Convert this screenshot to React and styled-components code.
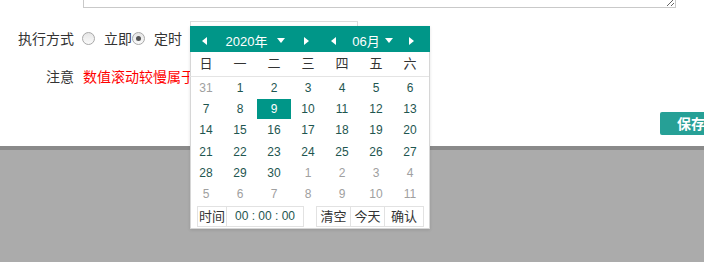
import React from 'react'
import styled, { createGlobalStyle } from 'styled-components';

const GlobalStyle = createGlobalStyle`
    body {
        margin: 0;
        overflow: hidden;
        font-family: "Liberation Sans", "Noto Sans CJK SC", sans-serif;
        color: #333;
    }
`

const weekDays = ['日', '一', '二', '三', '四', '五', '六'];

// 2020-06 grid, other-month days flagged
const buildDays = () => {
    const days = [{ n: 31, other: true }];
    for (let i = 1; i <= 30; i++) days.push({ n: i });
    for (let i = 1; i <= 11; i++) days.push({ n: i, other: true });
    return days;
}

function Calendar() {
    const days = buildDays();
    return (
        <CalBox>
            <CalHeader>
                <HeadHalf padLeft={12} padRight={12}>
                    <ArrowLeft />
                    <SelectText>2020年<Caret /></SelectText>
                    <ArrowRight />
                </HeadHalf>
                <HeadHalf padLeft={10} padRight={16}>
                    <ArrowLeft />
                    <SelectText gap={5}>06月<Caret /></SelectText>
                    <ArrowRight />
                </HeadHalf>
            </CalHeader>
            <WeekRow>
                {weekDays.map(d => <WeekCell key={d}>{d}</WeekCell>)}
            </WeekRow>
            <DayGrid>
                {days.map((d, i) => (
                    <DayCell key={i} other={d.other} active={!d.other && d.n === 9}>
                        {d.n}
                    </DayCell>
                ))}
            </DayGrid>
            <CalFooter>
                <TimeGroup>
                    <TimeLabel>时间</TimeLabel>
                    <TimeValue>00 : 00 : 00</TimeValue>
                </TimeGroup>
                <BtnGroup>
                    <CalBtn width={35}>清空</CalBtn>
                    <CalBtn width={35}>今天</CalBtn>
                    <CalBtn width={40}>确认</CalBtn>
                </BtnGroup>
            </CalFooter>
        </CalBox>
    )
}

function App() {
    return (
        <Page>
            <GlobalStyle />
            <Main>
                <FormRow>
                    <Label />
                    <TextArea />
                </FormRow>
                <FormRow top={13} height={34}>
                    <Label>执行方式</Label>
                    <RadioItem>
                        <Radio />
                        <span>立即</span>
                    </RadioItem>
                    <RadioItem>
                        <Radio checked />
                        <span>定时</span>
                    </RadioItem>
                    <DateField>
                        <Calendar />
                    </DateField>
                </FormRow>
                <FormRow top={11} height={20}>
                    <Label>注意</Label>
                    <Warning>数值滚动较慢属于正常现象，请耐心等待</Warning>
                </FormRow>
                <Actions>
                    <SaveButton>保存</SaveButton>
                </Actions>
            </Main>
            <Footer />
        </Page>
    )
}

export default App;

const Page = styled.div`
    width: 704px;
    height: 262px;
    overflow: hidden;
    display: flex;
    flex-direction: column;
`

const Main = styled.div`
    height: 146px;
    flex-shrink: 0;
    background: #fff;
    position: relative;
    z-index: 2;
`

const FormRow = styled.div`
    display: flex;
    align-items: center;
    margin-top: ${p => p.top || 0}px;
    height: ${p => p.height ? p.height + 'px' : 'auto'};
`

const Label = styled.div`
    width: 74px;
    margin-right: 9px;
    text-align: right;
    font-size: 14px;
    color: #333;
    flex-shrink: 0;
`

const TextArea = styled.textarea`
    width: 593px;
    height: 60px;
    margin: -52px 0 0;
    box-sizing: border-box;
    border: 1px solid #c9c9c9;
    display: block;
    font-family: inherit;
`

const RadioItem = styled.label`
    display: flex;
    align-items: center;
    font-size: 14px;
    color: #333;
    &:first-of-type {
        margin-left: -1px;
    }
`

const Radio = styled.span`
    width: 11px;
    height: 11px;
    border-radius: 50%;
    border: 1px solid #a8a8a8;
    background: linear-gradient(#e6e6e6, #fafafa);
    margin-right: 9px;
    position: relative;
    &::after {
        content: '';
        display: ${p => p.checked ? 'block' : 'none'};
        position: absolute;
        left: 3px;
        top: 3px;
        width: 5px;
        height: 5px;
        border-radius: 50%;
        background: #555;
    }
`

const DateField = styled.div`
    position: relative;
    align-self: flex-start;
    width: 168px;
    height: 34px;
    box-sizing: border-box;
    border: 1px solid #dcdcdc;
    margin-left: 8px;
`

const Warning = styled.div`
    font-size: 14px;
    color: #f00;
    white-space: nowrap;
`

const Actions = styled.div`
    margin-top: 26px;
    padding-left: 660px;
`

const SaveButton = styled.div`
    width: 80px;
    height: 23px;
    background: #26a096;
    color: #fff;
    font-size: 14px;
    font-weight: bold;
    padding-left: 17px;
    line-height: 24px;
    border-radius: 2px;
`

const Footer = styled.div`
    flex: 1;
    background: #ababab;
    border-top: 4px solid #8a8a8a;
`

const CalBox = styled.div`
    position: absolute;
    left: -1px;
    top: 4px;
    width: 240px;
    box-sizing: border-box;
    background: #fff;
    border: 1px solid #d6d6d6;
    border-top: none;
    box-shadow: 0 1px 3px rgba(0, 0, 0, 0.12);
    font-size: 12px;
`

const CalHeader = styled.div`
    display: flex;
    height: 26px;
    background: #009688;
    margin: 0 -1px;
`

const HeadHalf = styled.div`
    display: flex;
    align-items: center;
    justify-content: space-between;
    padding-left: ${p => p.padLeft}px;
    padding-right: ${p => p.padRight}px;
    padding-top: 3px;
    flex: ${p => p.padLeft === 12 ? '0 0 131px' : '1'};
    box-sizing: border-box;
`

const ArrowLeft = styled.span`
    width: 0;
    height: 0;
    border-top: 4px solid transparent;
    border-bottom: 4px solid transparent;
    border-right: 5px solid #fff;
`

const ArrowRight = styled.span`
    width: 0;
    height: 0;
    border-top: 4px solid transparent;
    border-bottom: 4px solid transparent;
    border-left: 5px solid #fff;
`

const SelectText = styled.span`
    display: flex;
    align-items: center;
    gap: ${p => p.gap || 10}px;
    color: #fff;
    font-size: 13px;
`

const Caret = styled.span`
    width: 0;
    height: 0;
    border-left: 4px solid transparent;
    border-right: 4px solid transparent;
    border-top: 5px solid #fff;
`

const WeekRow = styled.div`
    display: grid;
    grid-template-columns: repeat(7, 34px);
    height: 24px;
    align-items: center;
    border-bottom: 1px solid #e4e4e4;
    line-height: 16px;
    margin-left: -2px;
`

const WeekCell = styled.div`
    text-align: center;
    font-size: 13px;
    color: #333;
`

const DayGrid = styled.div`
    display: grid;
    grid-template-columns: repeat(7, 34px);
    grid-auto-rows: 21.2px;
    line-height: 14px;
    margin-left: -2px;
`

const DayCell = styled.div`
    display: flex;
    align-items: center;
    justify-content: center;
    margin-top: 1px;
    font-size: 12px;
    color: ${p => p.active ? '#fff' : p.other ? '#a0a0a0' : '#1e5650'};
    background: ${p => p.active ? '#009688' : 'transparent'};
`

const CalFooter = styled.div`
    display: flex;
    justify-content: space-between;
    padding: 2px 5px 1px 6px;
`

const TimeGroup = styled.div`
    display: flex;
`

const TimeLabel = styled.div`
    width: 30px;
    height: 21px;
    box-sizing: border-box;
    border: 1px solid #e2e2e2;
    font-size: 13px;
    line-height: 19px;
    text-align: center;
    color: #333;
`

const TimeValue = styled.div`
    width: 77px;
    height: 21px;
    box-sizing: border-box;
    border: 1px solid #e2e2e2;
    border-left: none;
    font-size: 12px;
    line-height: 19px;
    text-align: center;
    color: #1e5650;
`

const BtnGroup = styled.div`
    display: flex;
`

const CalBtn = styled.div`
    width: ${p => p.width}px;
    height: 21px;
    box-sizing: border-box;
    border: 1px solid #e2e2e2;
    margin-left: -1px;
    font-size: 13px;
    line-height: 19px;
    text-align: center;
    color: #333;
`
